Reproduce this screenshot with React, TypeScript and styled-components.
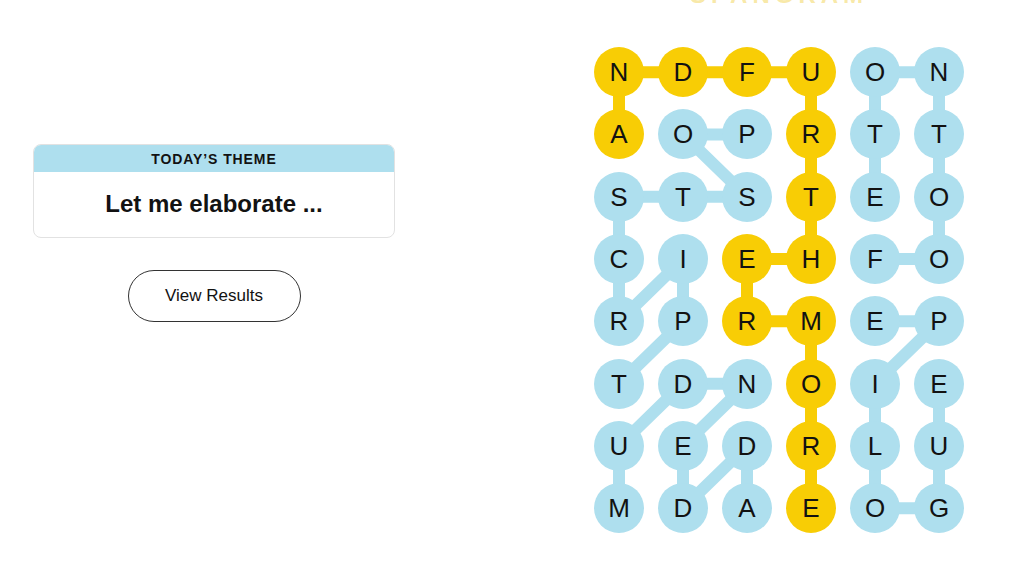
import React from "react";
import styled, { createGlobalStyle } from "styled-components";

const Global = createGlobalStyle`
  html, body { margin: 0; padding: 0; background: #ffffff; }
  body { font-family: "Liberation Sans", Arial, sans-serif; color: #121212; }
`;

const YELLOW = "#f8cd05";
const BLUE = "#aedfee";
const COL_W = 64;
const ROW_H = 62.3;

const LETTERS = [
  "NDFUON",
  "AOPRTT",
  "STSTEO",
  "CIEHFO",
  "RPRMEP",
  "TDNOIE",
  "UEDRLU",
  "MDAEOG",
];

type P = [number, number];

const SPANGRAM: P[] = [
  [1, 0], [0, 0], [0, 1], [0, 2], [0, 3], [1, 3], [2, 3], [3, 3], [3, 2], [4, 2], [4, 3], [5, 3], [6, 3], [7, 3],
];
const WORDS: P[][] = [
  [[3, 4], [3, 5], [2, 5], [1, 5], [0, 5], [0, 4], [1, 4], [2, 4]],
  [[4, 4], [4, 5], [5, 4], [6, 4], [7, 4], [7, 5], [6, 5], [5, 5]],
  [[1, 2], [1, 1], [2, 2], [2, 1], [2, 0], [3, 0], [4, 0], [3, 1], [4, 1], [5, 0]],
  [[7, 2], [6, 2], [7, 1], [6, 1], [5, 2], [5, 1], [6, 0], [7, 0]],
];

const yellowSet = new Set(SPANGRAM.map(([r, c]) => `${r}-${c}`));

const Page = styled.div`
  display: flex;
  width: 1024px;
  height: 576px;
  overflow: hidden;
`;

const LeftCol = styled.div`
  width: 428px;
  display: flex;
  flex-direction: column;
  align-items: center;
  padding-top: 144px;
  box-sizing: border-box;
`;

const ThemeCard = styled.div`
  width: 362px;
  border: 1px solid #e2e2e2;
  border-radius: 8px;
  overflow: hidden;
  box-sizing: border-box;
`;

const ThemeHeader = styled.div`
  background: ${BLUE};
  height: 27px;
  display: flex;
  align-items: center;
  justify-content: center;
  font-size: 14px;
  font-weight: 700;
  letter-spacing: 0.9px;
  color: #121212;
`;

const ThemeBody = styled.div`
  height: 65px;
  display: flex;
  align-items: center;
  justify-content: center;
  font-size: 24px;
  font-weight: 700;
  color: #121212;
  padding-bottom: 2px;
  box-sizing: border-box;
`;

const ResultsButton = styled.button`
  margin-top: 32px;
  width: 173px;
  height: 52px;
  border: 1px solid #333333;
  border-radius: 26px;
  background: #ffffff;
  font-family: "Liberation Sans", Arial, sans-serif;
  font-size: 17px;
  color: #121212;
  cursor: pointer;
`;

const RightCol = styled.div`
  padding-left: 159px;
  display: flex;
  flex-direction: column;
`;

const Hint = styled.div`
  width: ${COL_W * 6}px;
  text-align: center;
  font-size: 24px;
  font-weight: 700;
  line-height: 24px;
  height: 24px;
  margin-top: -17px;
  letter-spacing: 5px;
  color: rgba(240, 205, 60, 0.45);
`;

const Board = styled.div`
  position: relative;
  margin-top: 34px;
  display: grid;
  grid-template-columns: repeat(6, ${COL_W}px);
  grid-auto-rows: ${ROW_H}px;
`;

const Lines = styled.svg`
  position: absolute;
  left: 0;
  top: 0;
  z-index: 0;
  pointer-events: none;
`;

const Cell = styled.div`
  position: relative;
  z-index: 1;
  display: flex;
  align-items: center;
  justify-content: center;
`;

const Bubble = styled.div<{ $gold: boolean }>`
  width: 50px;
  height: 50px;
  border-radius: 50%;
  background: ${(p) => (p.$gold ? YELLOW : BLUE)};
  display: flex;
  align-items: center;
  justify-content: center;
  font-size: 26px;
  color: #121212;
  line-height: 1;
`;

const cx = (c: number) => c * COL_W + COL_W / 2;
const cy = (r: number) => r * ROW_H + ROW_H / 2;

const Connector = ({ pts, color }: { pts: P[]; color: string }) => (
  <polyline
    points={pts.map(([r, c]) => `${cx(c)},${cy(r)}`).join(" ")}
    fill="none"
    stroke={color}
    strokeWidth={12}
    strokeLinejoin="round"
  />
);

export default function App() {
  const w = COL_W * 6;
  const h = ROW_H * 8;
  return (
    <Page>
      <Global />
      <LeftCol>
        <ThemeCard>
          <ThemeHeader>TODAY’S THEME</ThemeHeader>
          <ThemeBody>Let me elaborate ...</ThemeBody>
        </ThemeCard>
        <ResultsButton>View Results</ResultsButton>
      </LeftCol>
      <RightCol>
        <Hint>SPANGRAM</Hint>
        <Board>
          <Lines width={w} height={h} viewBox={`0 0 ${w} ${h}`}>
            {WORDS.map((pts, i) => (
              <Connector key={i} pts={pts} color={BLUE} />
            ))}
            <Connector pts={SPANGRAM} color={YELLOW} />
          </Lines>
          {LETTERS.map((row, r) =>
            row.split("").map((ch, c) => (
              <Cell key={`${r}-${c}`}>
                <Bubble $gold={yellowSet.has(`${r}-${c}`)}>{ch}</Bubble>
              </Cell>
            ))
          )}
        </Board>
      </RightCol>
    </Page>
  );
}
